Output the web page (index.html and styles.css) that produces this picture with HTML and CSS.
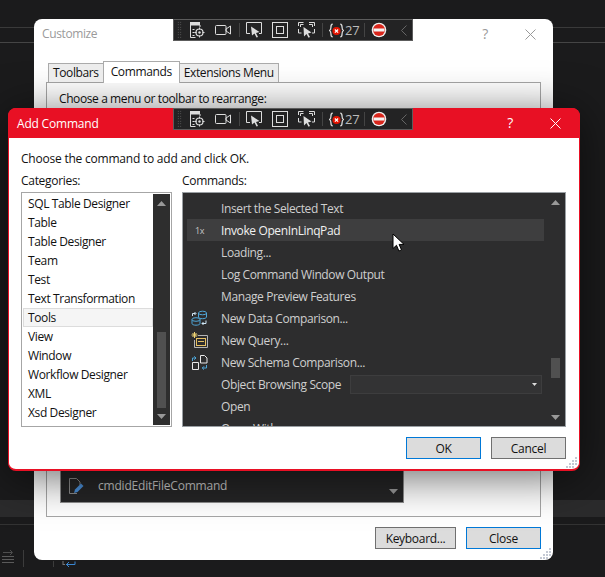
FILE: index.html
```html
<!DOCTYPE html>
<html lang="en">
<head>
<meta charset="utf-8">
<title>Add Command</title>
<link rel="stylesheet" href="styles.css">
</head>
<body>
<svg class="defs" width="0" height="0" aria-hidden="true">
  <defs>
    <symbol id="i-select" viewBox="0 0 16 16">
      <path d="M1 .5h10M1 2.500h10" stroke="#ddd" stroke-width="2" fill="none"/>
      <path d="M1.500 3v12.500h5M11 3v2M3.500 7.500h2M3.500 10.500h2M3.500 13.500h2" stroke="#ddd" fill="none"/>
      <circle cx="10.500" cy="10.500" r="3.500" stroke="#ddd" stroke-width="1.200" fill="none"/>
      <circle cx="10.500" cy="10.500" r="1.200" fill="#ddd"/>
      <path d="M10.500 5.500v2M10.500 13.500v2M5.500 10.500h2M13.500 10.500h2" stroke="#ddd" fill="none"/>
    </symbol>
    <symbol id="i-camera" viewBox="0 0 16 10">
      <rect x=".5" y=".5" width="10.500" height="9" rx="1" stroke="#ddd" fill="none"/>
      <path d="M11 4l4.500-3v8L11 6z" stroke="#ddd" fill="none"/>
    </symbol>
    <symbol id="i-win" viewBox="0 0 16 16">
      <path d="M4 11.500H.5V.5h15v11H13" stroke="#ddd" fill="none"/>
      <path d="M5 4.500l8.500 5.500-3.500 1 2 4-1.500.5-2-4L6 13.500z" fill="#ddd"/>
    </symbol>
    <symbol id="i-square" viewBox="0 0 16 16">
      <rect x=".5" y=".5" width="15" height="15" stroke="#ddd" fill="none"/>
      <rect x="4.500" y="4.500" width="7" height="7" stroke="#ddd" fill="none"/>
    </symbol>
    <symbol id="i-screens" viewBox="0 0 17 16">
      <path d="M.5 4V.5h5M11 .5h5.500V4M.5 7v4h3M16.500 7v4H14M2.500 5V2.500h3M11 2.500h3.500V5" stroke="#ddd" fill="none"/>
      <path d="M5.500 5l8 5.500-3.500 1 2 3.500-1.500.7-2-3.700-2.500 2.500z" fill="#ddd"/>
    </symbol>
    <symbol id="i-break" viewBox="0 0 14 14">
      <path d="M3.500 1C2 1 1.800 2.500 1.800 4c0 1.800-.3 2.500-1.300 3 1 .5 1.300 1.200 1.300 3 0 1.500.2 3 1.700 3M10.500 1c1.500 0 1.700 1.500 1.700 3 0 1.800.3 2.500 1.300 3-1 .5-1.300 1.200-1.300 3 0 1.500-.2 3-1.700 3" stroke="#ddd" stroke-width="1.200" fill="none"/>
      <circle cx="7" cy="7.500" r="3.800" fill="#e51400"/>
      <path d="M5.500 6l3 3M8.500 6l-3 3" stroke="#fff" stroke-width="1.200"/>
    </symbol>
    <symbol id="i-stop" viewBox="0 0 16 16">
      <circle cx="8" cy="8" r="7.300" fill="#f0f0f0"/>
      <circle cx="8" cy="8" r="6" fill="#d9261c"/>
      <rect x="2.500" y="6.500" width="11" height="3" fill="#f4f4f4"/>
    </symbol>
    <symbol id="i-tri-up" viewBox="0 0 9 5"><path d="M4.500 0L9 5H0z" fill="#999"/></symbol>
    <symbol id="i-tri-down" viewBox="0 0 9 5"><path d="M0 0h9L4.500 5z" fill="#999"/></symbol>
    <symbol id="i-close" viewBox="0 0 11 11"><path d="M.5.500l10 10M10.500.500l-10 10" stroke="currentColor" fill="none"/></symbol>
    <symbol id="i-grip" viewBox="0 0 12 12">
      <path d="M9 1h2v2H9zM6 4h2v2H6zM9 4h2v2H9zM3 7h2v2H3zM6 7h2v2H6zM9 7h2v2H9zM0 10h2v2H0zM3 10h2v2H3zM6 10h2v2H6z" fill="#c4c9d4"/>
    </symbol>
  </defs>
</svg>

<div class="desktop">
  <div class="ln ln-a"></div>
  <div class="ln ln-b"></div>
  <div class="band"></div>
  <div class="ln ln-c"></div>
  <svg class="bottom-icons" width="80" height="20" viewBox="0 0 80 20">
    <path d="M2 6.500h12M2 9.500h12M2 12.500h12" stroke="#5a5a5a" fill="none" transform="translate(0 1)"/>
    <path d="M3 3.500h9M10 1l2.500 2.500L10 6" stroke="#4e4e4e" fill="none"/>
    <path d="M23.500 1v17" stroke="#3c3c3c"/>
    <path d="M53.500 12v6" stroke="#3c3c3c"/>
    <path d="M63 12v4M63 15.500h2" stroke="#777" fill="none"/>
    <path d="M66 15.500h9v-3M69 13l-2.500 2.500L69 18" stroke="#3a86d0" fill="none"/>
  </svg>
</div>

<section class="win customize">
  <header class="win-head">
    <span class="win-title">Customize</span>
    <span class="win-ctl">
      <span class="help">?</span>
      <svg class="x" width="11" height="11"><use href="#i-close"/></svg>
    </span>
  </header>
  <div class="tabs">
    <span class="tab">Toolbars</span>
    <span class="tab active">Commands</span>
    <span class="tab">Extensions Menu</span>
  </div>
  <div class="panel">
    <p class="panel-label">Choose a menu or toolbar to rearrange:</p>
    <div class="rearrange">
      <div class="rearrange-item">
        <svg width="15" height="16" viewBox="0 0 15 16">
          <path d="M8 15.500H.5V.5h7l3.500 3.500v3" stroke="#8a8a8a" fill="none"/>
          <path d="M5 15l1-3.500 6-6 2.500 2.500-6 6z" fill="#4a8fd8"/>
        </svg>
        <span>cmdidEditFileCommand</span>
      </div>
      <svg class="rearrange-arrow" width="9" height="5"><use href="#i-tri-down"/></svg>
    </div>
  </div>
  <footer class="win-foot">
    <button class="btn">Keyboard...</button>
    <button class="btn primary">Close</button>
  </footer>
  <svg class="grip" width="12" height="12"><use href="#i-grip"/></svg>
  <div class="capture-bar">
    <span class="cb-grip"></span>
    <svg class="cb-select" width="16" height="16"><use href="#i-select"/></svg>
    <svg class="cb-camera" width="16" height="10"><use href="#i-camera"/></svg>
    <span class="cb-sep"></span>
    <svg class="cb-win" width="16" height="16"><use href="#i-win"/></svg>
    <svg class="cb-square" width="16" height="16"><use href="#i-square"/></svg>
    <svg class="cb-screens" width="17" height="16"><use href="#i-screens"/></svg>
    <span class="cb-sep"></span>
    <svg class="cb-break" width="15" height="15"><use href="#i-break"/></svg>
    <span class="cb-count">27</span>
    <span class="cb-sep"></span>
    <svg class="cb-stop" width="16" height="16"><use href="#i-stop"/></svg>
    <svg class="cb-chev" width="6" height="11" viewBox="0 0 6 11"><path d="M5.500.500L.5 5.500l5 5" stroke="#666" fill="none"/></svg>
  </div>
</section>

<section class="win addcmd">
  <header class="add-head">
    <span class="add-title">Add Command</span>
    <span class="add-ctl">
      <span class="help">?</span>
      <svg class="x" width="11" height="11"><use href="#i-close"/></svg>
    </span>
  </header>
  <div class="add-body">
    <p class="add-intro">Choose the command to add and click OK.</p>
    <div class="add-cols">
      <div class="col col-cat">
        <label class="col-label">Categories:</label>
        <div class="catlist">
          <ul class="cat-items">
            <li>SQL Table Designer</li>
            <li>Table</li>
            <li>Table Designer</li>
            <li>Team</li>
            <li>Test</li>
            <li>Text Transformation</li>
            <li class="sel">Tools</li>
            <li>View</li>
            <li>Window</li>
            <li>Workflow Designer</li>
            <li>XML</li>
            <li>Xsd Designer</li>
          </ul>
          <div class="sb sb-cat">
            <svg width="9" height="5"><use href="#i-tri-up"/></svg>
            <span class="thumb"></span>
            <svg width="9" height="5"><use href="#i-tri-down"/></svg>
          </div>
        </div>
      </div>
      <div class="col col-cmd">
        <label class="col-label">Commands:</label>
        <div class="cmdlist">
          <ul class="cmd-items">
            <li><span class="ico"></span>Insert the Selected Text</li>
            <li class="hover"><span class="ico one">1x</span>Invoke OpenInLinqPad</li>
            <li><span class="ico"></span>Loading...</li>
            <li><span class="ico"></span>Log Command Window Output</li>
            <li><span class="ico"></span>Manage Preview Features</li>
            <li><span class="ico"><svg width="17" height="16" viewBox="0 0 17 16">
              <ellipse cx="11.500" cy="3" rx="4" ry="1.800" stroke="#4fa6d8" fill="none"/>
              <path d="M7.500 3v4c0 1 1.800 1.700 4 1.700s4-.7 4-1.700V3" stroke="#4fa6d8" fill="none"/>
              <ellipse cx="5" cy="9.500" rx="4" ry="1.800" stroke="#4fa6d8" fill="none"/>
              <path d="M1 9.500v4c0 1 1.800 1.700 4 1.700s4-.7 4-1.700v-4" stroke="#4fa6d8" fill="none"/>
              <path d="M1.500 6V3.500h3M3.500 2l1.500 1.500L3.500 5M15 10.500v3h-4M12.500 12L11 13.500l1.500 1.500" stroke="#cfe6f5" fill="none"/>
            </svg></span>New Data Comparison...</li>
            <li><span class="ico"><svg width="17" height="16" viewBox="0 0 17 16">
              <path d="M7 3.500h9.500v12H3.500V8" stroke="#b5b5b5" fill="none"/>
              <rect x="5.500" y="6.500" width="9" height="7" stroke="#e6c063" fill="none"/>
              <path d="M7 9.500h6" stroke="#e6c063"/>
              <path d="M3.500 0v6M.5 3h6M1.500 1l4 4M5.500 1l-4 4" stroke="#f2d675" fill="none"/>
            </svg></span>New Query...</li>
            <li><span class="ico"><svg width="17" height="16" viewBox="0 0 17 16">
              <path d="M1.500 8.500h6v7h-6z" stroke="#e8e8e8" fill="none"/>
              <path d="M9.500 1.500h4l2.500 2.500v5h-6.500z" stroke="#e8e8e8" fill="none"/>
              <path d="M1.500 7V4h3M3.300 2.300L5 4 3.300 5.700M15.500 11v3h-4.500M13 12.300L11.300 14l1.700 1.700" stroke="#4fa6d8" fill="none"/>
            </svg></span>New Schema Comparison...</li>
            <li><span class="ico"></span><span class="obj-label">Object Browsing Scope</span>
              <span class="combo"><svg width="5" height="3" viewBox="0 0 7 4"><path d="M0 0h7L3.500 4z" fill="#ddd"/></svg></span>
            </li>
            <li><span class="ico"></span>Open</li>
            <li><span class="ico"></span>Open With...</li>
          </ul>
          <div class="sb sb-cmd">
            <svg width="9" height="5"><use href="#i-tri-up"/></svg>
            <span class="thumb"></span>
            <svg width="9" height="5"><use href="#i-tri-down"/></svg>
          </div>
        </div>
      </div>
    </div>
    <div class="add-foot">
      <button class="btn primary">OK</button>
      <button class="btn">Cancel</button>
    </div>
  </div>
  <svg class="grip" width="12" height="12"><use href="#i-grip"/></svg>
  <div class="capture-bar">
    <span class="cb-grip"></span>
    <svg class="cb-select" width="16" height="16"><use href="#i-select"/></svg>
    <svg class="cb-camera" width="16" height="10"><use href="#i-camera"/></svg>
    <span class="cb-sep"></span>
    <svg class="cb-win" width="16" height="16"><use href="#i-win"/></svg>
    <svg class="cb-square" width="16" height="16"><use href="#i-square"/></svg>
    <svg class="cb-screens" width="17" height="16"><use href="#i-screens"/></svg>
    <span class="cb-sep"></span>
    <svg class="cb-break" width="15" height="15"><use href="#i-break"/></svg>
    <span class="cb-count">27</span>
    <span class="cb-sep"></span>
    <svg class="cb-stop" width="16" height="16"><use href="#i-stop"/></svg>
    <svg class="cb-chev" width="6" height="11" viewBox="0 0 6 11"><path d="M5.500.500L.5 5.500l5 5" stroke="#666" fill="none"/></svg>
  </div>
</section>

<svg class="cursor" width="14" height="20" viewBox="0 0 14 20">
  <path d="M1 1v14.500l3.500-3.200 2.400 5.700 2.600-1.100-2.400-5.500H12z" fill="#fff" stroke="#000"/>
</svg>
</body>
</html>
```

FILE: styles.css
```css
* { box-sizing: border-box; }
html, body { margin: 0; padding: 0; height: 577px; overflow: hidden; }
body {
  background: #1b1b1c;
  font-family: "Open Sans", "Noto Sans", sans-serif;
  font-size: 12px;
  letter-spacing: -.38px;
  color: #111;
  position: relative;
}
.defs { position: absolute; }
ul { list-style: none; margin: 0; padding: 0; }
p { margin: 0; }

.desktop { display: flex; flex-direction: column; height: 577px; position: relative; }
.ln { height: 1px; background: #3a3a3a; }
.ln-a { margin-top: 27px; }
.ln-b { margin-top: 14px; background: #454545; }
.band { height: 17px; margin-top: 457px; background: #2b2b2c; }
.ln-c { margin-top: 7px; background: #333; }
.bottom-icons { position: absolute; left: 0; top: 549px; }

.win { position: absolute; background: #fff; border-radius: 8px; }
.customize {
  left: 34px; top: 19px; width: 519px; height: 541px;
  display: flex; flex-direction: column;
  padding: 0 12px;
}
.win-head { height: 42px; display: flex; justify-content: space-between; align-items: flex-start; padding-top: 6px; flex: none; }
.win-title { color: #9a9a9a; font-size: 12px; margin-left: -4px; }
.win-ctl { display: flex; align-items: center; gap: 37px; color: #999; margin-right: 5px; padding-top: 2px; }
.help { font-size: 14px; line-height: 14px; }

.tabs { display: flex; align-items: flex-end; height: 21px; padding-left: 3px; flex: none; position: relative; z-index: 1; }
.tab {
  height: 19px; padding: 0 4px; line-height: 17px;
  background: #ececec; border: 1px solid #aaa; border-bottom: 0;
  white-space: nowrap; margin-left: -1px;
}
.tab.active { height: 22px; background: #fff; border-color: #aaa; padding: 0 7px; line-height: 19px; position: relative; margin-bottom: -1px; }

.panel {
  height: 435px; flex: none; border: 1px solid #a6a6a6; background: #fff;
  padding: 7px 12px 13px; display: flex; flex-direction: column; justify-content: space-between;
}
.panel-label { letter-spacing: -.4px; }
.rearrange {
  height: 40px; width: 344px; margin-left: 1px; background: #252526; border: 1px solid #8e8e8e;
  display: flex; justify-content: space-between; align-items: flex-end;
  padding: 0 5px 7px 8px;
}
.rearrange-item { display: flex; align-items: center; gap: 14px; color: #c8c8c8; margin-bottom: 1px; letter-spacing: -.2px; }
.rearrange-arrow { margin-bottom: 1px; }

.win-foot { display: flex; justify-content: flex-end; gap: 10px; margin-top: 10px; }
.btn {
  height: 22px; width: 75px; padding: 0;
  background: #dcdcdc; border: 1px solid #707070;
  font: 12px "Open Sans", "Noto Sans", sans-serif; color: #111; letter-spacing: -.3px;
}
.win-foot .btn:first-child { width: 81px; }
.btn.primary { border-color: #0078d7; }

.grip { position: absolute; right: 1px; bottom: 1px; }

.capture-bar {
  position: absolute; left: 139px; top: 0; width: 240px; height: 22px;
  background: #232324; border: 1px solid #5c5c5c;
  display: flex; align-items: center; color: #ccc;
}
.addcmd .capture-bar { left: 164px; top: -1px; }
.cb-grip { width: 5px; height: 18px; margin-left: 3px;
  background-image: radial-gradient(#6a6a6a 40%, transparent 45%);
  background-size: 2.500px 2.500px; }
.cb-select { margin-left: 7px; }
.cb-camera { margin-left: 10px; }
.cb-sep { width: 1px; height: 14px; background: #444; }
.capture-bar > .cb-camera + .cb-sep { margin-left: 8px; }
.cb-win { margin-left: 6px; }
.cb-square { margin-left: 10px; }
.cb-screens { margin-left: 10px; }
.cb-screens + .cb-sep { margin-left: 7px; }
.cb-break { margin-left: 6px; }
.cb-count { margin-left: 1px; font-size: 13px; width: 15px; color: #bbb; letter-spacing: -.3px; }
.cb-count + .cb-sep { margin-left: 4px; }
.cb-stop { margin-left: 6px; }
.cb-chev { margin-left: 14px; }

.addcmd {
  left: 8px; top: 108px; width: 572px; height: 363px;
  border: 1px solid #e81024; border-bottom-width: 2px;
  box-shadow: 0 6px 45px rgba(0,0,0,.6);
  display: flex; flex-direction: column;
}
.add-head {
  height: 30px; margin: -1px -1px 0; background: #e81024; color: #fff;
  border-radius: 8px 8px 0 0; flex: none;
  display: flex; justify-content: space-between; align-items: center; padding: 0 19px 0 9px;
}
.add-title { font-size: 12px; letter-spacing: -.2px; }
.add-ctl { display: flex; align-items: center; gap: 37px; }
.add-ctl .help { color: #fff; }

.add-body { padding: 13px 12px 0; display: flex; flex-direction: column; }
.add-intro { line-height: 16px; letter-spacing: -.22px; }
.add-cols { display: flex; gap: 10px; margin-top: 6px; }
.col-label { display: block; line-height: 16px; margin-bottom: 3px; letter-spacing: -.3px; }
.col-cat { width: 151px; }
.col-cmd { width: 384px; }
.catlist, .cmdlist { height: 235px; display: flex; border: 1px solid #a6a6a6; overflow: hidden; }
.catlist { background: #fff; padding: 1px; }
.cat-items { flex: 1; padding-top: 0; }
.cat-items li { height: 19px; line-height: 19px; padding-left: 5px; color: #111; }
.cat-items li.sel { background: #f5f5f5; border: 1px solid #dcdcdc; padding-left: 4px; line-height: 17px; }
.sb { width: 17px; background: #2e2e2e; display: flex; flex-direction: column; align-items: center; flex: none; }
.sb-cat { padding: 7px 0 6px; }
.sb-cat svg:first-child { flex: none; }
.sb-cat .thumb { width: 9px; height: 76px; background: #505050; margin-top: auto; }
.sb-cat svg:last-child { margin-top: 6px; }

.cmdlist { background: #2d2d2e; border: 1px solid #9a9fa3; padding-left: 4px; box-shadow: inset 0 0 0 1px #2d2d2e; }
.cmd-items { flex: 1; padding-top: 4px; }
.cmd-items li { height: 22px; display: flex; align-items: center; color: #cfcfcf; white-space: nowrap; }
.cmd-items li.hover { background: #3e3e3f; color: #f1f1f1; }
.ico { width: 34px; flex: none; display: flex; padding-left: 4px; align-items: center; }
.ico.one { font-size: 9px; color: #c4c4c4; padding-left: 8px; }
.obj-label { width: 129px; flex: none; }
.combo { width: 192px; height: 19px; background: #333334; border: 1px solid #3d3d3e; display: flex; justify-content: flex-end; align-items: center; padding-right: 4px; }
.sb-cmd { width: 21px; background: transparent; padding: 7px 0 6px 1px; }
.sb-cmd .thumb { width: 9px; height: 20px; background: #505050; margin-top: 153px; }
.sb-cmd svg:last-child { margin-top: auto; }

.add-foot { display: flex; justify-content: flex-end; gap: 10px; margin-top: 10px; padding-right: 1px; }
.cursor { position: absolute; left: 392px; top: 233px; }
```
